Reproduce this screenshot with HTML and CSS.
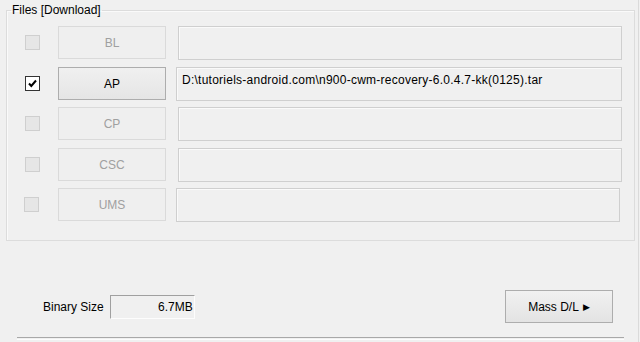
FILE: index.html
```html
<!DOCTYPE html>
<html>
<head>
<meta charset="utf-8">
<link rel="stylesheet" href="styles.css">
</head>
<body>
<div class="window">
  <fieldset class="group">
    <legend class="group-title">Files [Download]</legend>
    <div class="row row-1">
      <span class="check is-disabled"></span>
      <span class="btn is-disabled">BL</span>
      <span class="field field-in"></span>
    </div>
    <div class="row row-2">
      <span class="check is-checked"><svg viewBox="0 0 13 13" width="13" height="13"><path d="M3 6.5 L5.3 9 L10 3.5" fill="none" stroke="#000" stroke-width="2"/></svg></span>
      <span class="btn">AP</span>
      <span class="field">D:\tutoriels-android.com\n900-cwm-recovery-6.0.4.7-kk(0125).tar</span>
    </div>
    <div class="row row-3">
      <span class="check is-disabled"></span>
      <span class="btn is-disabled">CP</span>
      <span class="field field-in"></span>
    </div>
    <div class="row row-4">
      <span class="check is-disabled"></span>
      <span class="btn is-disabled">CSC</span>
      <span class="field field-in"></span>
    </div>
    <div class="row row-5">
      <span class="check is-disabled check-out"></span>
      <span class="btn is-disabled">UMS</span>
      <span class="field"></span>
    </div>
  </fieldset>
  <div class="footer">
    <div class="size">
      <span class="size-label">Binary Size</span>
      <span class="size-box">6.7MB</span>
    </div>
    <span class="btn mass">Mass D/L <span class="tri">&#9654;</span></span>
  </div>
  <div class="rule"></div>
</div>
</body>
</html>
```
FILE: styles.css
```css
html, body {
  margin: 0;
  padding: 0;
  background: #f0f0f0;
}
body {
  font-family: "Liberation Sans", Arial, sans-serif;
  font-size: 12px;
  color: #000;
}
.window {
  width: 638px;
  height: 342px;
  border-right: 1px solid #dadada;
  box-sizing: content-box;
  overflow: hidden;
}
.group {
  margin: 4px 0 0 6px;
  width: 629px;
  height: 237px;
  box-sizing: border-box;
  border: 1px solid #dcdcdc;
  padding: 0;
  box-shadow: inset 1px 1px 0 #fafafa;
}
.group-title {
  padding: 0 1px;
  margin-left: 4px;
  font-size: 12px;
  line-height: 13px;
}
.row {
  display: flex;
  align-items: center;
  height: 33px;
  margin-top: 8px;
}
.row-1 { margin-top: 9px; }
.row-3 { margin-top: 7px; }
.row-5 { margin-top: 7px; }
.check {
  width: 15px;
  height: 15px;
  box-sizing: border-box;
  margin-left: 18px;
  margin-right: 18px;
  border: 1px solid #333;
  background: #fff;
  display: flex;
  align-items: center;
  justify-content: center;
}
.check.is-disabled {
  border-color: #cfcfcf;
  background: #e6e6e6;
}
.check-out { margin-left: 17px; margin-right: 19px; }
.btn {
  width: 108px;
  height: 33px;
  box-sizing: border-box;
  border: 1px solid #adadad;
  background: linear-gradient(#f0f0f0, #e5e5e5);
  display: flex;
  align-items: center;
  justify-content: center;
  font-size: 12px;
  color: #000;
}
.btn.is-disabled {
  border-color: #dadada;
  background: #efefef;
  color: #a0a0a0;
}
.field {
  height: 34px;
  box-sizing: border-box;
  margin-left: 10px;
  width: 446px;
  border: 1px solid #cfcfcf;
  box-shadow: inset 1px 1px 0 #fafafa;
  padding: 5px 0 0 5px;
  font-size: 12px;
  line-height: 14px;
  letter-spacing: 0.25px;
  white-space: nowrap;
}
.field-in {
  margin-left: 12px;
  width: 444px;
}
.row-5 .field { width: 444px; }
.footer {
  display: flex;
  align-items: center;
  justify-content: space-between;
  margin-top: 49px;
  height: 33px;
  padding: 0 25px 0 43px;
}
.size {
  display: flex;
  align-items: center;
}
.size-label {
  font-size: 12px;
  margin-right: 6px;
}
.size-box {
  width: 85px;
  height: 24px;
  box-sizing: border-box;
  border-top: 1px solid #a0a0a0;
  border-left: 1px solid #a0a0a0;
  border-right: 1px solid #fdfdfd;
  border-bottom: 1px solid #fdfdfd;
  text-align: right;
  padding: 4px 1px 0 0;
  font-size: 12px;
  line-height: 14px;
  margin-top: 1px;
}
.btn.mass {
  width: 108px;
  background: linear-gradient(#f1f1f1, #e3e3e3);
}
.tri {
  font-size: 9px;
  margin-left: 4px;
}
.rule {
  margin: 14px 0 0 17px;
  width: 607px;
  height: 1px;
  border-top: 1px solid #a8a8a8;
  border-bottom: 1px solid #fcfcfc;
}
```
